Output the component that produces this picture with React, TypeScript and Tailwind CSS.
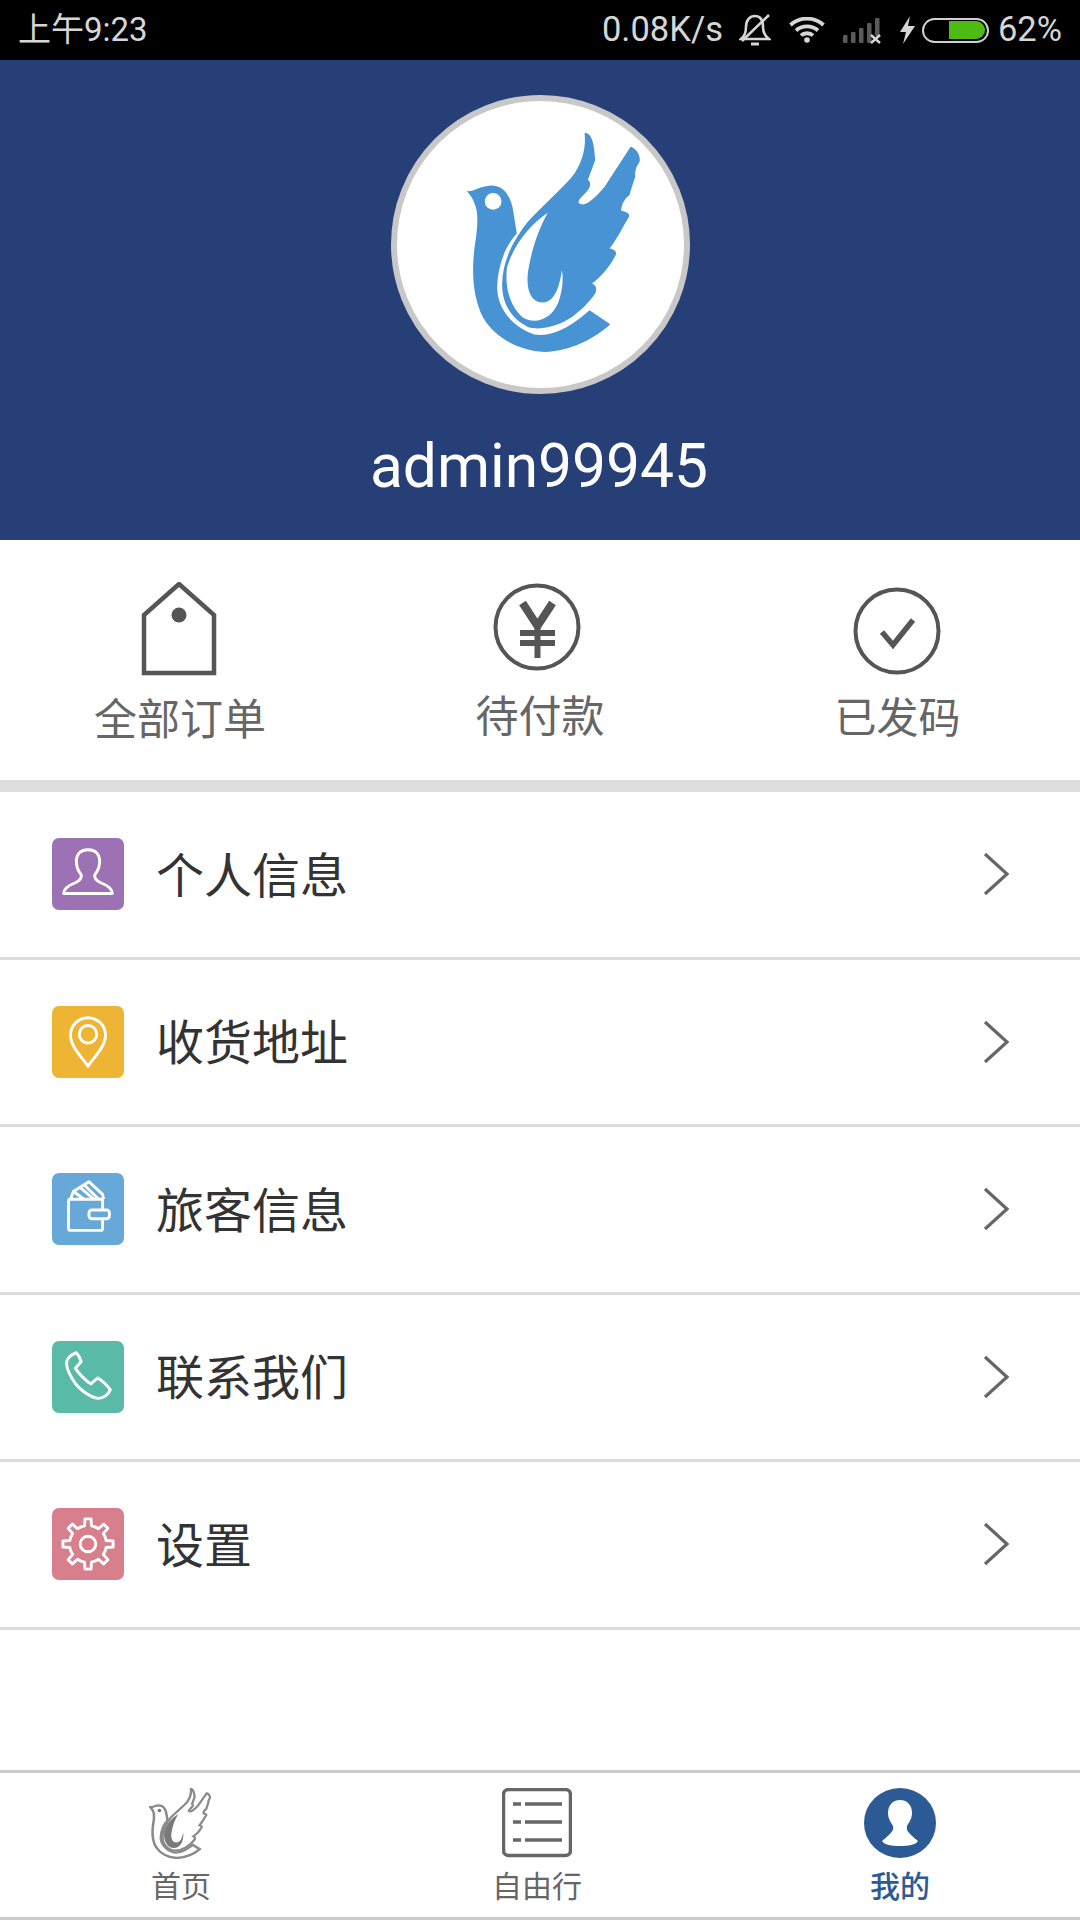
const cjk = "font-['Roboto','Noto_Sans_CJK_SC',sans-serif]";

const birdBody =
  "M287 333 C310 335 325 318 360 316 C395 316 415 340 425 385 L437 460 C400 500 380 560 378 620 C378 680 420 740 490 763 C550 772 610 730 655 690 L717 732 C670 775 600 812 520 815 C440 812 370 770 335 710 C305 650 300 570 312 490 C320 440 322 400 312 375 C305 355 298 345 287 333 Z";
const birdWing =
  "M640 158 C660 160 668 180 672 240 C665 260 655 285 650 300 C660 305 658 320 650 330 C640 345 622 355 622 368 C640 385 670 355 700 320 L778 200 C795 205 808 225 805 245 C795 260 790 270 792 290 C785 310 780 325 775 345 C760 355 750 375 750 392 C765 395 778 400 772 412 C755 440 735 480 715 505 C730 508 738 515 733 525 C715 560 690 590 662 610 C675 615 678 625 672 640 C655 665 630 690 600 712 C560 738 510 752 470 740 C420 715 392 670 393 610 C395 545 420 490 470 425 C520 370 580 320 610 280 C635 240 645 200 640 158 Z";
const birdGap =
  "M530 398 C480 430 430 490 408 560 C400 620 415 675 455 712 C495 735 540 715 560 670 C572 640 578 600 572 570 C565 620 550 665 515 667 C480 668 465 630 470 580 C478 520 500 450 530 398 Z";

function Bird() {
  return (
    <svg viewBox="78 63 860 860" className="w-full h-full">
      <path d={birdBody} fill="#4793d3" />
      <path d={birdWing} fill="#4793d3" />
      <path d={birdGap} fill="#fff" />
      <circle cx="366" cy="364" r="25" fill="#fff" />
    </svg>
  );
}

function NavBird() {
  return (
    <svg viewBox="275 150 540 675" preserveAspectRatio="none" className="w-[62px] h-[71px]">
      <path d={birdBody} fill="#fff" stroke="#8a8a8a" strokeWidth="22" />
      <path d={birdWing} fill="#fff" stroke="#8a8a8a" strokeWidth="20" />
      <path d={birdGap} fill="#7a7a7a" />
      <circle cx="366" cy="364" r="16" fill="#777" />
    </svg>
  );
}

const gearPath = (() => {
  const pts: string[] = [];
  const teeth = 8;
  for (let i = 0; i < teeth; i++) {
    const a = (i * Math.PI * 2) / teeth - Math.PI / 2;
    const step = (Math.PI * 2) / teeth;
    const p = (r: number, t: number) =>
      `${(37 + r * Math.cos(t)).toFixed(1)} ${(37 + r * Math.sin(t)).toFixed(1)}`;
    pts.push(p(19, a - step * 0.5), p(19, a - step * 0.24), p(26, a - step * 0.15), p(26, a + step * 0.15), p(19, a + step * 0.24));
  }
  return "M" + pts.join(" L") + " Z";
})();

const tileIcons = {
  person: (
    <path d="M37 12 C28 12 25 18 25 24 C25 30 27 34 30 38 C31 42 28 44 24 46 C16 49 12 52 12 57 L62 57 C62 52 58 49 50 46 C46 44 43 42 44 38 C47 34 49 30 49 24 C49 18 46 12 37 12 Z" />
  ),
  pin: (
    <>
      <path d="M37 62 C32 54 19 42 19 30 A18 18 0 0 1 55 30 C55 42 42 54 37 62 Z" />
      <circle cx="37" cy="29" r="9" />
    </>
  ),
  wallet: (
    <>
      <path d="M52 38 L52 29 Q52 27 50 27 L19 27 Q17 27 17 29 L17 57 Q17 59 19 59 L50 59 Q52 59 52 57 L52 47" />
      <rect x="38" y="38" width="21" height="9" rx="3" />
      <path d="M19 27 L22 19 L38 9 L52 22 L53 27 M22 19 L33 27 M28 14 L43 27 M33 12 L48 27" />
    </>
  ),
  phone: (
    <path d="M25 12 C20 14 15 18 15 23 C15 30 20 38 25 45 C31 52 40 58 47 59 C53 59 58 55 60 50 C56 45 52 41 47 38 L40 44 C36 42 27 33 24 28 L30 21 C29 18 27 14 25 12 Z" />
  ),
  gear: (
    <>
      <path d={gearPath} />
      <circle cx="37" cy="37" r="8" />
    </>
  ),
};

const rows = [
  { label: "个人信息", bg: "bg-[#9d72b5]", icon: tileIcons.person },
  { label: "收货地址", bg: "bg-[#eeb534]", icon: tileIcons.pin },
  { label: "旅客信息", bg: "bg-[#66a8d8]", icon: tileIcons.wallet },
  { label: "联系我们", bg: "bg-[#59bba7]", icon: tileIcons.phone },
  { label: "设置", bg: "bg-[#d77f8c]", icon: tileIcons.gear },
];

function StatusBar() {
  return (
    <div className={`h-[60px] bg-black flex items-center justify-between pl-[18px] pr-[18px] text-[#d6d6d6] text-[34.5px] ${cjk}`}>
      <span className="text-[33px]">上午9:23</span>
      <div className="flex items-center">
        <span>0.08K/s</span>
        <svg viewBox="0 0 32 34" className="w-[32px] h-[34px] ml-[16px]" fill="none" stroke="#d6d6d6" strokeWidth="2.6">
          <path d="M2 26 C6 23 7 19 7 14 C7 7 11 3 16 3 C21 3 24 7 24 14 C24 19 26 23 30 26 Z" />
          <path d="M12 31 L20 31" strokeWidth="3" />
          <path d="M30 2 L3 28" />
        </svg>
        <svg viewBox="0 0 36 26" className="w-[36px] h-[26px] ml-[18px]" fill="none" stroke="#d6d6d6" strokeWidth="3.8">
          <path d="M1.5 8 C11 -0.5 25 -0.5 34.5 8" />
          <path d="M7 13.5 C13 8 23 8 29 13.5" />
          <path d="M12 18.5 C15 15.5 21 15.5 24 18.5" />
          <circle cx="18" cy="23" r="2.8" fill="#d6d6d6" stroke="none" />
        </svg>
        <svg viewBox="0 0 38 27" className="w-[38px] h-[27px] ml-[18px]" fill="#5a5a5a">
          <rect x="0" y="18" width="4.5" height="8" rx="1" />
          <rect x="8" y="15" width="4.5" height="11" rx="1" />
          <rect x="16" y="11" width="4.5" height="15" rx="1" />
          <rect x="24" y="6" width="4.5" height="20" rx="1" />
          <rect x="32" y="1" width="4.5" height="18" rx="1" />
          <path d="M28 18 L37 26 M37 18 L28 26" stroke="#d6d6d6" strokeWidth="2.4" />
        </svg>
        <svg viewBox="0 0 16 28" className="w-[16px] h-[28px] ml-[18px]" fill="#d6d6d6">
          <path d="M11 0 L1 16 L7 16 L4 28 L16 10 L9 10 Z" />
        </svg>
        <div className="w-[67px] h-[25px] ml-[7px] rounded-full border-[2.5px] border-[#d0d0d0] flex justify-end items-center pr-[1.5px]">
          <div className="w-[36px] h-[18px] bg-[#4dbb12] rounded-r-full" />
        </div>
        <span className="ml-[9px]">62%</span>
      </div>
    </div>
  );
}

function Header() {
  return (
    <div className="h-[480px] bg-[#263f77] flex flex-col items-center pt-[35px]">
      <div className="w-[299px] h-[299px] rounded-full border-[6px] border-[#c8c8c8] bg-white">
        <Bird />
      </div>
      <div className="mt-[38px] -ml-[2px] text-[60.5px] leading-[70px] text-white font-['Roboto',sans-serif]">admin99945</div>
    </div>
  );
}

function OrderTabs() {
  return (
    <div className={`h-[240px] grid grid-cols-3 pt-[42px] text-[43px] leading-[44px] text-[#666] ${cjk}`}>
      <div className="flex flex-col items-center">
        <svg viewBox="0 0 76 94" className="w-[76px] h-[94px] -ml-[3px]" fill="none" stroke="#555" strokeWidth="4.5">
          <path d="M38 2 L73 33 L73 91 L3 91 L3 33 Z" />
          <circle cx="38" cy="33" r="7.5" fill="#555" stroke="none" />
        </svg>
        <span className="mt-[22px]">全部订单</span>
      </div>
      <div className="flex flex-col items-center">
        <svg viewBox="0 0 90 94" className="w-[90px] h-[94px] -ml-[6px]" fill="none" stroke="#555">
          <circle cx="45" cy="45" r="41.5" strokeWidth="4" />
          <path d="M30.5 21 L45.5 44 L60.5 21" strokeWidth="8" />
          <path d="M45.5 44 L45.5 76 M28 51 L63 51 M28 61 L63 61" strokeWidth="6" />
        </svg>
        <span className="mt-[19px]">待付款</span>
      </div>
      <div className="flex flex-col items-center">
        <svg viewBox="0 0 90 94" className="w-[90px] h-[94px] -ml-[6px]" fill="none" stroke="#555">
          <circle cx="45" cy="49" r="41.5" strokeWidth="4" />
          <path d="M30 50 L41 63 L61 38" strokeWidth="5.5" />
        </svg>
        <span className="mt-[21px] -ml-[5px] text-[42px]">已发码</span>
      </div>
    </div>
  );
}

function MenuRow({ label, bg, icon }: { label: string; bg: string; icon: React.ReactNode }) {
  return (
    <div className="h-[167.5px] border-b-[3px] border-[#dcdcdc] flex items-center pl-[52px] pr-[70px]">
      <div className={`w-[72px] h-[72px] rounded-[7px] ${bg}`}>
        <svg viewBox="0 0 74 74" className="w-full h-full" fill="none" stroke="#fff" strokeWidth="3" strokeLinejoin="round">
          {icon}
        </svg>
      </div>
      <span className={`ml-[32px] pt-[5px] text-[48px] text-[#333] ${cjk}`}>{label}</span>
      <svg viewBox="0 0 28 44" className="w-[28px] h-[44px] ml-auto" fill="none" stroke="#666" strokeWidth="3.2">
        <path d="M3 2 L25 22 L3 42" />
      </svg>
    </div>
  );
}

function BottomNav() {
  return (
    <div className={`h-[150px] border-t-[3px] border-b-[3px] border-[#cbcbcb] grid grid-cols-3 pt-[15px] text-[30px] leading-[32px] text-[#666] ${cjk}`}>
      <div className="flex flex-col items-center">
        <NavBird />
        <span className="mt-[12px] ml-[2px]">首页</span>
      </div>
      <div className="flex flex-col items-center">
        <svg viewBox="0 0 70 74" className="w-[70px] h-[74px] -ml-[6px]" fill="none" stroke="#666">
          <rect x="1.5" y="1.5" width="67" height="66" rx="5" strokeWidth="3.5" />
          <path d="M11 16 L19 16 M23 16 L60 16 M11 34 L19 34 M23 34 L60 34 M11 52 L19 52 M23 52 L60 52" strokeWidth="3.5" />
        </svg>
        <span className="mt-[9px] -ml-[6px]">自由行</span>
      </div>
      <div className="flex flex-col items-center">
        <svg viewBox="0 0 72 74" className="w-[72px] h-[74px]">
          <ellipse cx="36" cy="35" rx="36" ry="35" fill="#2c5a94" />
          <path d="M36 12 C28 12 24 18 24 25 C24 31 27 34 29 38 C30 42 28 45 18 53 C20 57 28 58 36 58 C44 58 52 57 54 53 C44 45 42 42 43 38 C45 34 48 31 48 25 C48 18 44 12 36 12 Z" fill="#fff" />
        </svg>
        <span className="mt-[9px] text-[#2c5a94] font-medium">我的</span>
      </div>
    </div>
  );
}

export default function App() {
  return (
    <div className="w-[1080px] h-[1920px] bg-white flex flex-col">
      <StatusBar />
      <Header />
      <OrderTabs />
      <div className="h-[12px] bg-[#dcdedd]" />
      {rows.map((r) => (
        <MenuRow key={r.label} {...r} />
      ))}
      <div className="flex-1" />
      <BottomNav />
    </div>
  );
}
